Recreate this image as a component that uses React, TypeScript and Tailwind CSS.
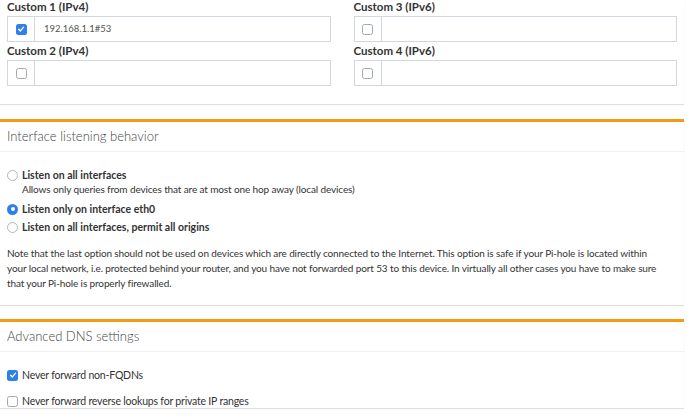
import React from "react";

const font = { fontFamily: "Lato, 'Noto Sans', sans-serif" };

function Check({ on }: { on?: boolean }) {
  if (on) {
    return (
      <span className="inline-flex h-[11px] w-[11px] shrink-0 items-center justify-center rounded-[2.5px] bg-[#2f7fe8]">
        <svg width="8" height="8" viewBox="0 0 10 10">
          <path d="M2 5.3 L4.2 7.4 L8.2 2.7" fill="none" stroke="#fff" strokeWidth="1.7" strokeLinecap="round" strokeLinejoin="round" />
        </svg>
      </span>
    );
  }
  return <span className="inline-block h-[11px] w-[11px] shrink-0 rounded-[2.5px] border border-[#a4a8ad] bg-white" />;
}

function Radio({ on }: { on?: boolean }) {
  if (on) {
    return (
      <span className="inline-flex h-[11px] w-[11px] shrink-0 items-center justify-center rounded-full bg-[#2f7fe8]">
        <span className="h-[4px] w-[4px] rounded-full bg-white" />
      </span>
    );
  }
  return <span className="inline-block h-[11px] w-[11px] shrink-0 rounded-full border border-[#b3b7bb] bg-white" />;
}

function DnsField({ label, value, on }: { label: string; value?: string; on?: boolean }) {
  return (
    <div>
      <div className="h-[14px] text-[11.5px] font-bold leading-[14px] text-[#333]">{label}</div>
      <div className="mt-[2px] flex h-[26px] border border-[#d2d6de] bg-white">
        <div className="flex w-[27px] items-center justify-center border-r border-[#d2d6de]">
          <Check on={on} />
        </div>
        <div className="flex items-center pl-[9px] text-[9.5px] text-[#555]">{value}</div>
      </div>
    </div>
  );
}

function BoxHeader({ title }: { title: string }) {
  return (
    <div className="flex h-[30px] items-center border-b border-[#f0f0f0] px-[7px] pt-[1px] text-[13px] font-light text-[#444]">
      {title}
    </div>
  );
}

function Option({ label, on, className }: { label: string; on?: boolean; className?: string }) {
  return (
    <div className={"flex h-[14px] items-center gap-[4px] " + (className ?? "")}>
      <Radio on={on} />
      <span className="text-[10.5px] font-bold leading-[14px] tracking-[0px]">{label}</span>
    </div>
  );
}

export default function App() {
  return (
    <div className="h-[416px] overflow-hidden bg-white pr-[6px] text-[#333]" style={font}>
      <div className="bg-white px-[7px] pb-[18px] shadow-[0_1px_1px_rgba(0,0,0,0.12)]">
        <div className="grid grid-cols-2 gap-x-[23px]">
          <div className="flex flex-col gap-[2px]">
            <DnsField label="Custom 1 (IPv4)" value="192.168.1.1#53" on />
            <DnsField label="Custom 2 (IPv4)" />
          </div>
          <div className="flex flex-col gap-[2px]">
            <DnsField label="Custom 3 (IPv6)" />
            <DnsField label="Custom 4 (IPv6)" />
          </div>
        </div>
      </div>

      <div className="mt-[15px] border-t-[3px] border-[#f39c12] bg-white shadow-[0_1px_1px_rgba(0,0,0,0.12)]">
        <BoxHeader title="Interface listening behavior" />
        <div className="px-[7px] pb-[14px] pt-[16px] text-[10px] tracking-[-0.12px]">
          <Option label="Listen on all interfaces" />
          <div className="pl-[15px] leading-[14px]">
            Allows only queries from devices that are at most one hop away (local devices)
          </div>
          <Option label="Listen only on interface eth0" on className="mt-[6px]" />
          <Option label="Listen on all interfaces, permit all origins" className="mt-[4px]" />
          <p className="mt-[12px] leading-[15px]">
            Note that the last option should not be used on devices which are directly connected to the Internet. This
            option is safe if your Pi-hole is located within
            <br />
            your local network, i.e. protected behind your router, and you have not forwarded port 53 to this device. In
            virtually all other cases you have to make sure
            <br />
            that your Pi-hole is properly firewalled.
          </p>
        </div>
      </div>

      <div className="mt-[14px] border-t-[3px] border-[#f39c12] bg-white shadow-[0_1px_1px_rgba(0,0,0,0.12)]">
        <BoxHeader title="Advanced DNS settings" />
        <div className="px-[7px] pt-[16px] text-[10.5px] tracking-[-0.2px]">
          <div className="flex h-[14px] items-center gap-[4px]">
            <Check on />
            <span className="leading-[14px]">Never forward non-FQDNs</span>
          </div>
          <div className="mt-[12px] flex h-[14px] items-center gap-[4px]">
            <Check />
            <span className="leading-[14px]">Never forward reverse lookups for private IP ranges</span>
          </div>
        </div>
      </div>
    </div>
  );
}
